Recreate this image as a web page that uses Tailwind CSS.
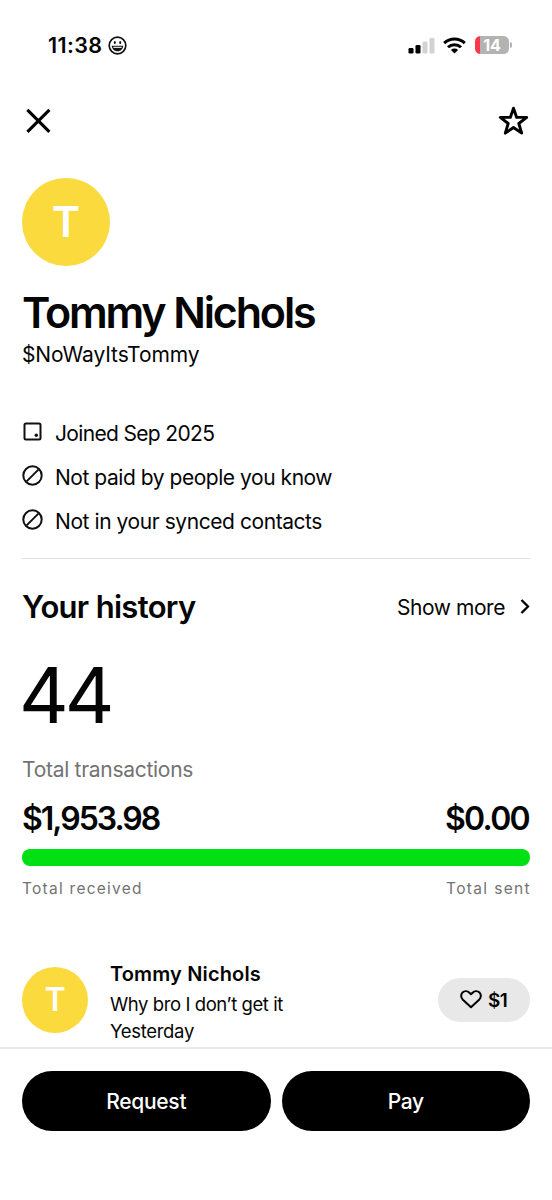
<!DOCTYPE html>
<html lang="en">
<head>
<meta charset="utf-8">
<meta name="viewport" content="width=device-width, initial-scale=1">
<title>Tommy Nichols</title>
<script src="https://cdn.jsdelivr.net/npm/@tailwindcss/browser@4"></script>
</head>
<body class="bg-white">
<div class="flex h-[1200px] w-[552px] flex-col overflow-hidden bg-white font-['Inter','Liberation_Sans',sans-serif] whitespace-nowrap text-[#050505]">
  <main class="flex h-[1047px] shrink-0 flex-col overflow-hidden px-[22px]">
    <!-- Status bar -->
    <header class="flex h-[90px] shrink-0 items-center justify-between pr-[18px] pl-[26px]">
      <div class="flex items-center gap-[6px]">
        <span class="text-[21.5px] font-semibold tracking-[0.400px]">11:38</span>
        <svg class="size-[19px]" viewBox="0 0 19 19" fill="none" stroke="#111">
          <circle cx="9.5" cy="9.5" r="8.3" stroke-width="1.7"/>
          <path d="M3.800 9.800h11.400c-.2 3.300-2.500 5.500-5.700 5.500s-5.500-2.200-5.700-5.500z" fill="#111" stroke="none"/>
          <path d="M5.300 11.300h8.400" stroke="#fff" stroke-width="1.100"/>
          <ellipse cx="6.800" cy="6.600" rx="1" ry="1.500" fill="#111" stroke="none"/>
          <ellipse cx="12.200" cy="6.600" rx="1" ry="1.500" fill="#111" stroke="none"/>
        </svg>
      </div>
      <div class="flex items-center">
        <svg class="h-[17px] w-[27px]" viewBox="0 0 27 17">
          <rect x="0.500" y="11" width="5" height="5.500" rx="1.300" fill="#000"/>
          <rect x="7.500" y="8" width="5" height="8.500" rx="1.300" fill="#000"/>
          <rect x="14.500" y="4.500" width="5" height="12" rx="1.300" fill="#d2d2d2"/>
          <rect x="21.500" y="1" width="5" height="15.500" rx="1.300" fill="#d2d2d2"/>
        </svg>
        <svg class="ml-[8px] h-[17px] w-[23px]" viewBox="0 0 23 17" fill="none" stroke="#000" stroke-width="3">
          <path d="M1.200 6.100a14.800 14.800 0 0 1 20.600 0"/>
          <path d="M5 10.300a9.300 9.300 0 0 1 13 0"/>
          <path d="M11.500 16.500 7.900 12.900a5.200 5.200 0 0 1 7.200 0z" fill="#000" stroke="none"/>
        </svg>
        <div class="ml-[9px] flex items-center gap-[1px]">
          <div class="flex h-[18px] w-[34px] items-center justify-center rounded-[5.500px] bg-linear-to-r from-[#f9384a] from-[5px] to-[#b3b3b3] to-[5px]">
            <span class="text-[16px] leading-none font-bold text-white">14</span>
          </div>
          <div class="h-[6px] w-[2px] rounded-r-full bg-[#b3b3b3]"></div>
        </div>
      </div>
    </header>

    <!-- Close and favourite -->
    <nav class="flex h-[62px] shrink-0 items-center justify-between pl-[3px]">
      <svg class="size-[27px]" viewBox="0 0 27 27" fill="none" stroke="#000" stroke-width="3.100"><path d="M2.400 1.900l22 22M24.400 1.900L2.400 23.900"/></svg>
      <svg class="mr-[1px] size-[32px]" viewBox="0 0 32 32" fill="none" stroke="#000" stroke-width="2.900" stroke-linejoin="round"><path d="M16.500 3.200l3.200 9.200h10l-7.900 6.100 2.900 9.600-8.200-5.600-8.200 5.600 2.900-9.600-7.900-6.100h10z"/></svg>
    </nav>

    <!-- Profile -->
    <div class="mt-[26.400px] flex size-[88px] shrink-0 items-center justify-center rounded-full bg-[#fada3c] pb-[1px] text-[43px] leading-none font-semibold text-white">T</div>
    <h1 class="mt-[20.100px] h-[52px] shrink-0 text-[43px] leading-[52px] font-semibold tracking-[-2.150px]">Tommy Nichols</h1>
    <p class="h-[33px] shrink-0 text-[21px] leading-[33px] tracking-[-0.100px]">$NoWayItsTommy</p>

    <ul class="mt-[39.500px] flex shrink-0 flex-col border-b border-[#e4e4e4] pb-[15px] text-[21px]">
      <li class="flex h-[44px] items-center gap-[12px]">
        <svg class="-mt-[3px] size-[21px]" viewBox="0 0 21 21" fill="none" stroke="#111" stroke-width="2"><rect x="2.500" y="2.500" width="16" height="16" rx="1.500"/><circle cx="14.300" cy="14.300" r="1.700" fill="#111" stroke="none"/></svg>
        <span class="pt-[1px] tracking-[-0.660px]">Joined Sep 2025</span>
      </li>
      <li class="flex h-[44px] items-center gap-[12px]">
        <svg class="-mt-[3px] size-[21px]" viewBox="0 0 21 21" fill="none" stroke="#111" stroke-width="2"><circle cx="10.500" cy="10.500" r="9.200"/><path d="M4.600 16.400L16.400 4.600"/></svg>
        <span class="pt-[1px] tracking-[-0.460px]">Not paid by people you know</span>
      </li>
      <li class="flex h-[44px] items-center gap-[12px]">
        <svg class="-mt-[3px] size-[21px]" viewBox="0 0 21 21" fill="none" stroke="#111" stroke-width="2"><circle cx="10.500" cy="10.500" r="9.200"/><path d="M4.600 16.400L16.400 4.600"/></svg>
        <span class="pt-[1px] tracking-[-0.430px]">Not in your synced contacts</span>
      </li>
    </ul>

    <!-- History summary -->
    <section class="flex shrink-0 flex-col pt-[20px]">
      <div class="flex h-[56px] items-center justify-between">
        <h2 class="text-[31px] font-semibold tracking-[-0.680px]">Your history</h2>
        <div class="flex items-center pt-[1px]">
          <span class="text-[21px] tracking-[-0.450px]">Show more</span>
          <svg class="ml-[14px] h-[16px] w-[11px]" viewBox="0 0 11 16" fill="none" stroke="#000" stroke-width="2.300"><path d="M2.500 1L9 7.500 2.500 14"/></svg>
        </div>
      </div>
      <div class="mt-[20px] -ml-[3px] h-[80px] text-[77px] leading-[80px] tracking-[-4px]">44</div>
      <div class="mt-[20.500px] h-[30px] text-[21px] leading-[30px] tracking-[-0.280px] text-[#737373]">Total transactions</div>
      <div class="mt-[13.500px] flex h-[40px] items-center justify-between text-[32px] font-semibold">
        <span class="tracking-[-2px]">$1,953.98</span>
        <span class="mr-[1px] tracking-[-1.700px]">$0.00</span>
      </div>
      <div class="mt-[10px] h-[17px] rounded-[8px] bg-[#00e013]"></div>
      <div class="mt-[13px] flex h-[20px] items-center justify-between text-[15.500px] text-[#737373]">
        <span class="tracking-[1.250px]">Total received</span>
        <span class="-mr-[1px] tracking-[1.350px]">Total sent</span>
      </div>
    </section>

    <!-- Latest transaction -->
    <article class="mt-[61px] flex shrink-0 items-start">
      <div class="mt-[7px] flex size-[66px] items-center justify-center rounded-full bg-[#fada3c] text-[32px] leading-none font-semibold text-white">T</div>
      <div class="ml-[21px] flex flex-col">
        <span class="ml-px h-[28px] text-[20px] leading-[28px] font-semibold tracking-[0.150px]">Tommy Nichols</span>
        <span class="mt-[1px] ml-px h-[30px] text-[18.500px] leading-[30px] tracking-[-0.420px]">Why bro I don’t get it</span>
        <span class="-mt-[1px] ml-px h-[27px] text-[18.500px] leading-[27px] tracking-[-0.320px]">Yesterday</span>
      </div>
      <div class="mt-[18px] ml-auto flex h-[44px] w-[92px] items-center rounded-full bg-[#e8e8e8] pl-[22px]">
        <svg class="h-[19px] w-[22px]" viewBox="0 0 22 19" fill="none" stroke="#000" stroke-width="2" stroke-linejoin="round"><path d="M11 17.300 2.900 9.700C.7 7.500.6 4.300 2.500 2.500s5-1.700 6.900.2L11 4.300l1.600-1.600c1.900-1.900 5-2 6.900-.2s1.800 5-.4 7.200z"/></svg>
        <span class="ml-[6px] pt-[2px] text-[19px] font-semibold tracking-[-0.500px]">$1</span>
      </div>
    </article>
  </main>

  <!-- Actions -->
  <footer class="flex grow gap-[11px] border-t-2 border-[#e9e9e9] px-[22px] pt-[21.500px] text-[21px] font-medium text-white">
    <button class="flex h-[60.500px] flex-1 items-center justify-center rounded-full bg-black pt-[2px] tracking-[-0.300px]">Request</button>
    <button class="flex h-[60.500px] flex-1 items-center justify-center rounded-full bg-black pt-[2px] tracking-[-0.300px]">Pay</button>
  </footer>
</div>
</body>
</html>
